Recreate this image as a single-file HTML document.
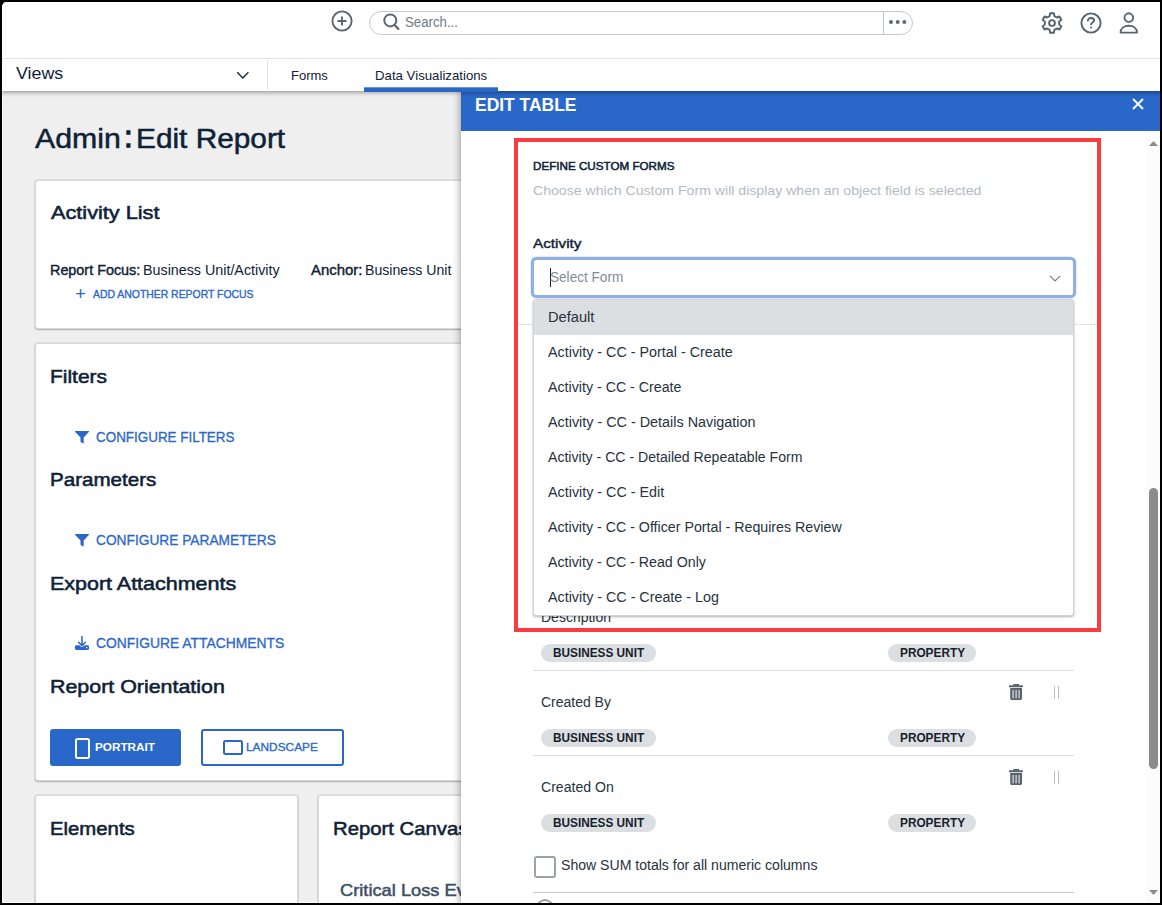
<!DOCTYPE html>
<html lang="en">
<head>
<meta charset="utf-8">
<title>Admin: Edit Report</title>
<style>
*{box-sizing:border-box;margin:0;padding:0}
html,body{width:1162px;height:905px;overflow:hidden;background:#000}
body{font-family:"Liberation Sans",sans-serif;color:#0e2237;position:relative}
#app{position:absolute;left:0;top:0;width:1162px;height:905px;background:#fff;overflow:hidden;clip-path:inset(2px 2px 2px 2px round 5px 0 0 0)}
.abs{position:absolute}
.t{position:absolute;white-space:pre;line-height:1}
.card{position:absolute;background:#fff;border:1px solid #d8dbdd;border-radius:3px;box-shadow:0 1px 1.5px rgba(0,0,0,.24),0 0 0 1px rgba(0,0,0,.06)}
.h2{font-weight:400;font-size:19px;color:#0e2237;-webkit-text-stroke:0.55px #0e2237}
.link{color:#2b66c9;font-weight:400;font-size:14px;-webkit-text-stroke:0.3px #2b66c9}
.pill{position:absolute;height:18px;border-radius:9px;background:#dcdfe2}
.pt{font-weight:700;font-size:12px;color:#16212c}
.hr{position:absolute;height:1px;background:#dedede}
.opt{font-size:14px;color:#27323d}
.row{font-size:14px;color:#27323d}
svg{position:absolute;overflow:visible}
</style>
</head>
<body>
<div id="app">

<!-- ===== page content (behind panel) ===== -->
<div class="abs" style="left:3px;top:0;width:1159px;height:902px;background:#efefef;border-radius:0 0 0 3px"></div>
<div class="t" id="ttl1" style="left:35.10px;top:125px;font-size:27.5px;font-weight:400;-webkit-text-stroke:0.5px #0e2237;transform-origin:0 0;transform:scaleX(1.0998)">Admin</div>
<div class="t" id="ttlc" style="left:124.3px;top:121.5px;font-size:29.5px;font-weight:400;-webkit-text-stroke:1.3px #0e2237">:</div>
<div class="t" id="ttl2" style="left:136.30px;top:125px;font-size:27.5px;font-weight:400;-webkit-text-stroke:0.5px #0e2237;transform-origin:0 0;transform:scaleX(1.0841)">Edit Report</div>

<div class="card" style="left:35px;top:180px;width:600px;height:149px"></div>
<div class="t h2" id="h_act" style="left:51.00px;top:203px;transform-origin:0 0;transform:scaleX(1.1417)">Activity List</div>
<div class="t" id="rf1" style="left:50.20px;top:263px;font-size:14px;font-weight:400;-webkit-text-stroke:0.4px #0e2237;transform-origin:0 0;transform:scaleX(1.0267)">Report Focus:</div>
<div class="t" id="rf2" style="left:143.10px;top:263px;font-size:14px;transform-origin:0 0;transform:scaleX(1.0209)">Business Unit/Activity</div>
<div class="t" id="an1" style="left:311.00px;top:263px;font-size:14px;font-weight:400;-webkit-text-stroke:0.4px #0e2237;transform-origin:0 0;transform:scaleX(1.0650)">Anchor:</div>
<div class="t" id="an2" style="left:365.00px;top:263px;font-size:14px;transform-origin:0 0;transform:scaleX(1.0085)">Business Unit</div>
<div class="t" id="addp" style="left:75.3px;top:285px;font-size:18px;color:#2b66c9">+</div>
<div class="t" id="addf" style="left:93.00px;top:289px;font-size:11px;color:#2b66c9;-webkit-text-stroke:0.35px #2b66c9;transform-origin:0 0;transform:scaleX(0.9468)">ADD ANOTHER REPORT FOCUS</div>

<div class="card" style="left:35px;top:343px;width:600px;height:438px"></div>
<div class="t h2" id="h_fil" style="left:50.00px;top:367px;transform-origin:0 0;transform:scaleX(1.1026)">Filters</div>
<svg style="left:75px;top:431px" width="14" height="13" viewBox="0 0 14 13"><path d="M0.6 0h12.8c.5 0 .8.6.4 1L8.7 6.6v5.2c0 .5-.6.8-1 .5l-1.9-1.4c-.2-.1-.3-.3-.3-.5V6.6L.2 1C-.2.6.1 0 .6 0z" fill="#2b66c9"/></svg>
<div class="t link" id="l_fil" style="left:95.60px;top:430px;transform-origin:0 0;transform:scaleX(0.9588)">CONFIGURE FILTERS</div>
<div class="t h2" id="h_par" style="left:50.00px;top:470px;transform-origin:0 0;transform:scaleX(1.0829)">Parameters</div>
<svg style="left:75px;top:534px" width="14" height="13" viewBox="0 0 14 13"><path d="M0.6 0h12.8c.5 0 .8.6.4 1L8.7 6.6v5.2c0 .5-.6.8-1 .5l-1.9-1.4c-.2-.1-.3-.3-.3-.5V6.6L.2 1C-.2.6.1 0 .6 0z" fill="#2b66c9"/></svg>
<div class="t link" id="l_par" style="left:95.60px;top:533px;transform-origin:0 0;transform:scaleX(0.9808)">CONFIGURE PARAMETERS</div>
<div class="t h2" id="h_exp" style="left:50.00px;top:574px;transform-origin:0 0;transform:scaleX(1.1297)">Export Attachments</div>
<svg style="left:75px;top:636px" width="14" height="14" viewBox="0 0 14 14"><path d="M7 .5v8.500M3.600 6.200L7 9.600l3.400-3.400" fill="none" stroke="#2b66c9" stroke-width="1.500" stroke-linecap="round" stroke-linejoin="round"/><path d="M1.400 9.200h3l1.600 1.500c.6.500 1.400.500 2 0l1.600-1.500h3c.8 0 1.400.6 1.400 1.400v2c0 .8-.6 1.400-1.400 1.400H1.400C.6 14 0 13.400 0 12.600v-2c0-.8.6-1.400 1.400-1.400z" fill="#2b66c9"/><circle cx="11.700" cy="11.600" r=".8" fill="#fff"/></svg>
<div class="t link" id="l_exp" style="left:95.60px;top:636px;transform-origin:0 0;transform:scaleX(0.9907)">CONFIGURE ATTACHMENTS</div>
<div class="t h2" id="h_ori" style="left:50.00px;top:677px;transform-origin:0 0;transform:scaleX(1.1260)">Report Orientation</div>

<div class="abs" style="left:50px;top:729px;width:131px;height:37px;background:#2967c8;border-radius:3px"></div>
<div class="abs" style="left:74.500px;top:738px;width:15.500px;height:20.500px;border:2px solid #fff;border-radius:2.500px"></div>
<div class="t" id="b_por" style="left:94.80px;top:742px;font-size:11.5px;font-weight:700;color:#fff;transform-origin:0 0;transform:scaleX(1.0210)">PORTRAIT</div>
<div class="abs" style="left:201px;top:729px;width:143px;height:37px;background:#fff;border:2px solid #2967c8;border-radius:3px"></div>
<div class="abs" style="left:222.500px;top:739.500px;width:20.500px;height:15.500px;border:2px solid #2967c8;border-radius:2.500px"></div>
<div class="t" id="b_lan" style="left:245.90px;top:742px;font-size:11.5px;font-weight:400;color:#2967c8;-webkit-text-stroke:0.3px #2967c8;transform-origin:0 0;transform:scaleX(1.0320)">LANDSCAPE</div>

<div class="card" style="left:35px;top:795px;width:263px;height:200px"></div>
<div class="t h2" id="h_ele" style="left:50.10px;top:819px;transform-origin:0 0;transform:scaleX(1.0697)">Elements</div>
<div class="card" style="left:318px;top:795px;width:400px;height:200px"></div>
<div class="t h2" id="h_can" style="left:333.00px;top:819px;transform-origin:0 0;transform:scaleX(1.0684)">Report Canvas</div>
<div class="t" id="h_cri" style="left:340.00px;top:882px;font-size:17px;font-weight:400;color:#3d5064;-webkit-text-stroke:0.5px #3d5064;transform-origin:0 0;transform:scaleX(1.0748)">Critical Loss Events</div>

<!-- ===== side panel ===== -->
<div class="abs" id="panel" style="left:461px;top:91px;width:701px;height:814px;background:#fff;box-shadow:-1px 0 7px rgba(0,0,0,.36)"></div>
<div class="abs" id="phead" style="left:461px;top:91px;width:701px;height:40px;background:#2967c8"></div>
<div class="t" id="p_ttl" style="left:475.00px;top:96px;font-size:18.5px;font-weight:700;color:#fff;transform-origin:0 0;transform:scaleX(0.9430)">EDIT TABLE</div>
<svg style="left:1132px;top:98px" width="12" height="12" viewBox="0 0 12 12"><path d="M1 1l10 10M11 1L1 11" stroke="#fff" stroke-width="1.800" fill="none"/></svg>

<div class="hr" style="left:518px;top:324px;width:580px;background:#e4e4e4"></div>

<div class="t" id="p_def" style="left:532.80px;top:161px;font-size:11px;font-weight:400;-webkit-text-stroke:0.5px #0e2237;color:#0e2237;transform-origin:0 0;transform:scaleX(1.0587)">DEFINE CUSTOM FORMS</div>
<div class="t" id="p_cho" style="left:532.60px;top:184px;font-size:13.5px;color:#b4babf;transform-origin:0 0;transform:scaleX(1.0446)">Choose which Custom Form will display when an object field is selected</div>
<div class="t" id="p_act" style="left:533.00px;top:237px;font-size:13.5px;font-weight:400;-webkit-text-stroke:0.4px #0e2237;color:#0e2237;transform-origin:0 0;transform:scaleX(1.1326)">Activity</div>

<!-- select -->
<div class="abs" style="left:531px;top:257px;width:545px;height:41px;border-radius:5.500px;background:#fff;border:3px solid #8fafe5;box-shadow:0 0 0 .5px rgba(143,175,229,.45)"></div>
<div class="abs" style="left:550px;top:268px;width:1px;height:19px;background:#1c2833"></div>
<div class="t" id="p_sel" style="left:550.00px;top:270px;font-size:14px;color:#828c95;transform-origin:0 0;transform:scaleX(0.9703)">Select Form</div>
<svg style="left:1049.400px;top:274.900px" width="12" height="7" viewBox="0 0 12 7"><path d="M.8.800L6 6l5.200-5.200" fill="none" stroke="#77828b" stroke-width="1.200"/></svg>

<!-- rows below dropdown -->
<div class="t row" id="p_desc" style="left:541px;top:610px">Description</div>
<div class="pill" style="left:541px;top:644px;width:115px"></div>
<div class="t pt" id="k_b1" style="left:553.00px;top:647px;transform-origin:0 0;transform:scaleX(0.9831)">BUSINESS UNIT</div>
<div class="pill" style="left:888px;top:644px;width:88px"></div>
<div class="t pt" id="k_p1" style="left:899.70px;top:647px;transform-origin:0 0;transform:scaleX(0.9853)">PROPERTY</div>
<div class="hr" style="left:533px;top:670px;width:541px"></div>

<div class="t row" id="p_cb" style="left:540.50px;top:695px;transform-origin:0 0;transform:scaleX(0.9976)">Created By</div>
<div class="pill" style="left:541px;top:729px;width:115px"></div>
<div class="t pt" id="k_b2" style="left:553.00px;top:732px;transform-origin:0 0;transform:scaleX(0.9831)">BUSINESS UNIT</div>
<div class="pill" style="left:888px;top:729px;width:88px"></div>
<div class="t pt" id="k_p2" style="left:899.70px;top:732px;transform-origin:0 0;transform:scaleX(0.9853)">PROPERTY</div>
<div class="hr" style="left:533px;top:755px;width:541px"></div>

<div class="t row" id="p_co" style="left:540.50px;top:780px;transform-origin:0 0;transform:scaleX(1.0064)">Created On</div>
<div class="pill" style="left:541px;top:814px;width:115px"></div>
<div class="t pt" id="k_b3" style="left:553.00px;top:817px;transform-origin:0 0;transform:scaleX(0.9831)">BUSINESS UNIT</div>
<div class="pill" style="left:888px;top:814px;width:88px"></div>
<div class="t pt" id="k_p3" style="left:899.70px;top:817px;transform-origin:0 0;transform:scaleX(0.9853)">PROPERTY</div>

<div class="abs" style="left:534px;top:856px;width:22px;height:22px;border:2px solid #9aa2aa;border-radius:3px;background:#fff"></div>
<div class="t row" id="p_sum" style="left:560.80px;top:858px;transform-origin:0 0;transform:scaleX(1.0048)">Show SUM totals for all numeric columns</div>
<div class="hr" style="left:533px;top:892px;width:541px;background:#c6c6c6"></div>
<div class="abs" style="left:535.500px;top:899px;width:18.500px;height:18.500px;border:2px solid #9aa2aa;border-radius:50%"></div>

<!-- trash + handles -->
<svg class="trash" style="left:1009px;top:683.900px" width="15" height="16" viewBox="0 0 15 16"><path d="M4.300 0h5.700v1.200H13.900v2H0v-2h4.300z" fill="#58656f"/><path d="M1.200 4.100H13v10.300c0 .9-.7 1.500-1.500 1.500H2.700c-.8 0-1.500-.6-1.500-1.500z" fill="#58656f"/><path d="M4.100 6v8.200M7.100 6v8.200M10.100 6v8.200" stroke="#fff" stroke-opacity=".85" stroke-width="1.150"/></svg>
<div class="abs" style="left:1054px;top:686px;width:1px;height:13px;background:#b7c1cc"></div>
<div class="abs" style="left:1058px;top:686px;width:1px;height:13px;background:#b7c1cc"></div>
<svg class="trash" style="left:1009px;top:768.900px" width="15" height="16" viewBox="0 0 15 16"><path d="M4.300 0h5.700v1.200H13.900v2H0v-2h4.300z" fill="#58656f"/><path d="M1.200 4.100H13v10.300c0 .9-.7 1.500-1.500 1.500H2.700c-.8 0-1.500-.6-1.500-1.500z" fill="#58656f"/><path d="M4.100 6v8.200M7.100 6v8.200M10.100 6v8.200" stroke="#fff" stroke-opacity=".85" stroke-width="1.150"/></svg>
<div class="abs" style="left:1054px;top:771px;width:1px;height:13px;background:#b7c1cc"></div>
<div class="abs" style="left:1058px;top:771px;width:1px;height:13px;background:#b7c1cc"></div>

<!-- dropdown -->
<div class="abs" id="dd" style="left:533px;top:299px;width:541px;height:317px;background:#fff;border:1px solid #d2d2d2;border-radius:3px;box-shadow:0 1px 2.5px rgba(0,0,0,.3)"></div>
<div class="abs" style="left:534px;top:300px;width:539px;height:35px;background:#dcdfe2;border-radius:2px 2px 0 0"></div>
<div class="t opt" id="o_0" style="left:548.00px;top:310px;transform-origin:0 0;transform:scaleX(1.0459)">Default</div>
<div class="t opt" id="o_1" style="left:548.30px;top:345px;transform-origin:0 0;transform:scaleX(1.0233)">Activity - CC - Portal - Create</div>
<div class="t opt" id="o_2" style="left:548.30px;top:380px;transform-origin:0 0;transform:scaleX(1.0150)">Activity - CC - Create</div>
<div class="t opt" id="o_3" style="left:548.30px;top:415px;transform-origin:0 0;transform:scaleX(1.0258)">Activity - CC - Details Navigation</div>
<div class="t opt" id="o_4" style="left:548.30px;top:450px;transform-origin:0 0;transform:scaleX(1.0063)">Activity - CC - Detailed Repeatable Form</div>
<div class="t opt" id="o_5" style="left:548.30px;top:485px;transform-origin:0 0;transform:scaleX(1.0231)">Activity - CC - Edit</div>
<div class="t opt" id="o_6" style="left:548.30px;top:520px;transform-origin:0 0;transform:scaleX(1.0158)">Activity - CC - Officer Portal - Requires Review</div>
<div class="t opt" id="o_7" style="left:548.30px;top:555px;transform-origin:0 0;transform:scaleX(1.0152)">Activity - CC - Read Only</div>
<div class="t opt" id="o_8" style="left:548.30px;top:590px;transform-origin:0 0;transform:scaleX(1.0216)">Activity - CC - Create - Log</div>

<!-- red highlight -->
<div class="abs" style="left:514px;top:138px;width:587px;height:494px;border:4px solid #fa3b40"></div>

<!-- scrollbar -->
<div class="abs" style="left:1146px;top:131px;width:14px;height:774px;background:#fcfcfc"></div>
<div class="abs" style="left:1149px;top:488px;width:9px;height:281px;border-radius:4.500px;background:#8b8b8b"></div>
<svg style="left:1149px;top:141px" width="9" height="5" viewBox="0 0 9 5"><path d="M0 5L4.500 0L9 5z" fill="#8b8b8b"/></svg>
<svg style="left:1149px;top:890px" width="9" height="5" viewBox="0 0 9 5"><path d="M0 0L4.500 5L9 0z" fill="#8b8b8b"/></svg>

<!-- ===== top bar + nav ===== -->
<div class="abs" id="nav" style="left:0;top:58px;width:1162px;height:33px;background:#fff;box-shadow:0 1px 5px rgba(0,0,0,.45)"></div>
<div class="abs" id="topbar" style="left:0;top:0;width:1162px;height:58px;background:#fff"></div>
<div class="abs" style="left:0;top:58px;width:1162px;height:1px;background:#dde3e6"></div>

<svg style="left:331px;top:10px" width="22" height="22" viewBox="0 0 22 22"><circle cx="11" cy="11" r="9.600" fill="none" stroke="#586773" stroke-width="1.900"/><path d="M11 6.500v9M6.500 11h9" stroke="#586773" stroke-width="1.900" fill="none"/></svg>
<div class="abs" id="search" style="left:369px;top:11px;width:544px;height:24px;border:1px solid #c5c9cc;border-radius:12px;background:#fff"></div>
<svg style="left:382px;top:13px" width="18" height="18" viewBox="0 0 18 18"><circle cx="8.300" cy="7.400" r="6" fill="none" stroke="#586773" stroke-width="2"/><path d="M12.700 11.900L16.400 15.900" stroke="#586773" stroke-width="2.200" stroke-linecap="round"/></svg>
<div class="t" id="s_txt" style="left:405.00px;top:15px;font-size:14px;color:#6f7c87;transform-origin:0 0;transform:scaleX(0.9450)">Search...</div>
<div class="abs" style="left:883px;top:12px;width:1px;height:22px;background:#c5c9cc"></div>
<svg style="left:888px;top:19px" width="20" height="6" viewBox="0 0 20 6"><circle cx="3" cy="3" r="2" fill="#5c6b77"/><circle cx="9.700" cy="3" r="2" fill="#5c6b77"/><circle cx="16.300" cy="3" r="2" fill="#5c6b77"/></svg>

<!-- gear -->
<svg id="gear" style="left:1041.300px;top:12.300px" width="22" height="22" viewBox="0 0 22 22"><path d="M13.38 4.10L12.89 1.28L9.11 1.28L8.62 4.10L6.21 5.49L3.53 4.51L1.64 7.78L3.83 9.61L3.83 12.39L1.64 14.22L3.53 17.49L6.21 16.51L8.62 17.90L9.11 20.72L12.89 20.72L13.38 17.90L15.79 16.51L18.47 17.49L20.36 14.22L18.17 12.39L18.17 9.61L20.36 7.78L18.47 4.51L15.79 5.49z" fill="none" stroke="#55646f" stroke-width="1.900" stroke-linejoin="round"/><circle cx="11" cy="11" r="2.900" fill="none" stroke="#55646f" stroke-width="1.900"/></svg>
<!-- help -->
<svg style="left:1080.300px;top:12.300px" width="22" height="22" viewBox="0 0 22 22"><circle cx="11" cy="11" r="9.600" fill="none" stroke="#55646f" stroke-width="1.900"/><path d="M7.900 8.600c0-1.600 1.400-2.600 3.100-2.600s3.100 1 3.100 2.500c0 2-3 2-3 3.900" fill="none" stroke="#55646f" stroke-width="1.900" stroke-linecap="round"/><circle cx="11.100" cy="15.400" r="1" fill="#55646f"/></svg>
<!-- user -->
<svg style="left:1118.200px;top:12.300px" width="22" height="22" viewBox="0 0 22 22"><circle cx="10.800" cy="5.600" r="4.300" fill="none" stroke="#55646f" stroke-width="1.900"/><path d="M2.600 20.600c0-4.200 3.400-6.800 8.200-6.800s8.200 2.600 8.200 6.800z" fill="none" stroke="#55646f" stroke-width="1.900" stroke-linejoin="round"/></svg>

<div class="t" id="n_views" style="left:16.00px;top:66.00px;font-size:16px;color:#0e2237;transform-origin:0 0;transform:scaleX(1.1143)">Views</div>
<svg style="left:236px;top:71px" width="14" height="9" viewBox="0 0 14 9"><path d="M1.200 1.300L6.800 6.900L12.400 1.300" fill="none" stroke="#1c2b3a" stroke-width="1.450"/></svg>
<div class="abs" style="left:267px;top:60px;width:1px;height:30px;background:#dde3e6"></div>
<div class="t" id="n_forms" style="left:291.30px;top:69px;font-size:13.5px;color:#0e2237;transform-origin:0 0;transform:scaleX(0.9625)">Forms</div>
<div class="t" id="n_dv" style="left:375.00px;top:69px;font-size:13.5px;color:#0e2237;transform-origin:0 0;transform:scaleX(0.9796)">Data Visualizations</div>
<div class="abs" style="left:364px;top:87px;width:134px;height:1px;background:#2967c8;opacity:.7"></div><div class="abs" style="left:364px;top:88px;width:134px;height:4px;background:#2967c8"></div>

</div>
</body>
</html>
